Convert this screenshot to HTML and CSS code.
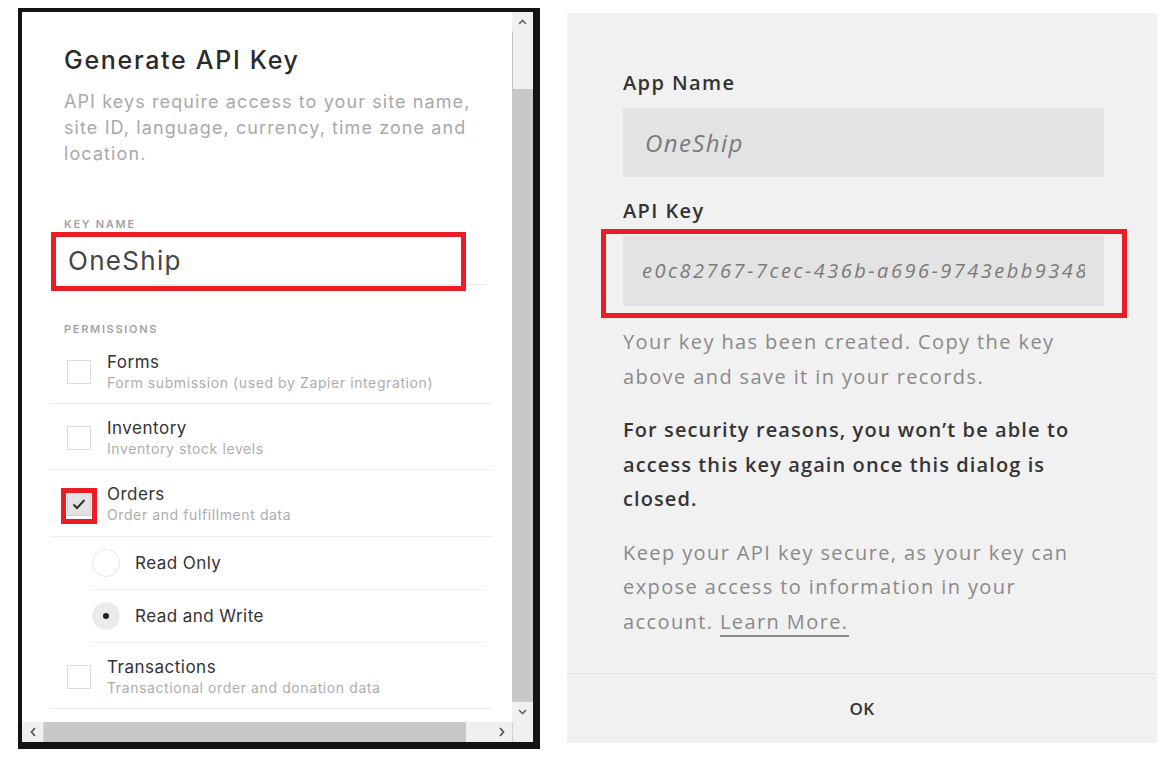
FILE: index.html
```html
<!DOCTYPE html>
<html lang="en">
<head>
    <meta charset="UTF-8">
    <meta name="viewport" content="width=device-width, initial-scale=1.0">
    <title>Generate API Key</title>
    <link rel="stylesheet" href="styles.css">
</head>
<body>
    <div class="frame">
        <div class="viewport">
            <div class="content">
                <h1 class="title">Generate API Key</h1>
                <p class="intro">API keys require access to your site name,<br>site ID, language, currency, time zone and<br>location.</p>

                <div class="label">KEY NAME</div>
                <div class="field">
                    <div class="name-input">OneShip</div>
                    <span class="mark mark-name"></span>
                </div>

                <div class="label perm-label">PERMISSIONS</div>
                <ul class="perms">
                    <li class="perm">
                        <span class="check"></span>
                        <div>
                            <div class="perm-title">Forms</div>
                            <div class="perm-sub">Form submission (used by Zapier integration)</div>
                        </div>
                    </li>
                    <li class="perm">
                        <span class="check"></span>
                        <div>
                            <div class="perm-title">Inventory</div>
                            <div class="perm-sub">Inventory stock levels</div>
                        </div>
                    </li>
                    <li class="perm perm-open">
                        <span class="check checked">
                            <svg width="24" height="24" viewBox="0 0 24 24"><path d="M6.5 12.5l3.5 3.5 7.5-8" fill="none" stroke="#333" stroke-width="2"/></svg>
                            <span class="mark mark-check"></span>
                        </span>
                        <div>
                            <div class="perm-title">Orders</div>
                            <div class="perm-sub">Order and fulfillment data</div>
                        </div>
                    </li>
                    <li class="option">
                        <span class="radio"></span>
                        <span class="option-text">Read Only</span>
                    </li>
                    <li class="option">
                        <span class="radio selected"><span class="dot"></span></span>
                        <span class="option-text">Read and Write</span>
                    </li>
                    <li class="perm">
                        <span class="check"></span>
                        <div>
                            <div class="perm-title">Transactions</div>
                            <div class="perm-sub">Transactional order and donation data</div>
                        </div>
                    </li>
                </ul>
            </div>
        </div>

        <div class="vscroll">
            <div class="sb-btn">
                <svg width="9" height="6" viewBox="0 0 9 6"><path d="M1 5l3.5-3.5L8 5" fill="none" stroke="#666" stroke-width="1.6"/></svg>
            </div>
            <div class="vtrack"></div>
            <div class="vthumb"></div>
            <div class="sb-btn">
                <svg width="9" height="6" viewBox="0 0 9 6"><path d="M1 1l3.5 3.5L8 1" fill="none" stroke="#666" stroke-width="1.6"/></svg>
            </div>
        </div>
        <div class="hscroll">
            <div class="sb-btn">
                <svg width="6" height="10" viewBox="0 0 6 10"><path d="M5 1L1.5 5 5 9" fill="none" stroke="#555" stroke-width="1.8"/></svg>
            </div>
            <div class="hthumb"></div>
            <div class="htrack"></div>
            <div class="sb-btn">
                <svg width="6" height="10" viewBox="0 0 6 10"><path d="M1 1l3.5 4L1 9" fill="none" stroke="#555" stroke-width="1.8"/></svg>
            </div>
        </div>
        <div class="corner"></div>
    </div>

    <div class="dialog">
        <div class="dialog-body">
            <div class="d-label">App Name</div>
            <div class="d-field app-name">OneShip</div>

            <div class="d-label">API Key</div>
            <div class="key-wrap">
                <div class="d-field api-key"><span class="key-text">e0c82767-7cec-436b-a696-9743ebb93482</span></div>
                <span class="mark mark-key"></span>
            </div>

            <p class="d-text">Your key has been created. Copy the key<br>above and save it in your records.</p>
            <p class="d-text strong">For security reasons, you won’t be able to<br>access this key again once this dialog is<br>closed.</p>
            <p class="d-text">Keep your API key secure, as your key can<br>expose access to information in your<br>account. <a href="#" class="learn">Learn More.</a></p>
        </div>
        <div class="dialog-footer">OK</div>
    </div>
</body>
</html>
```

FILE: styles.css
```css
body {
    margin: 0;
    background-color: #fff;
    display: flex;
    align-items: flex-start;
    font-family: 'Inter', 'Liberation Sans', sans-serif;
}

/* left: scrolled settings panel */
.frame {
    margin: 8px 0 0 18px;
    width: 511px;
    height: 730px;
    border-style: solid;
    border-color: #111315;
    border-width: 4px 7px 7px 4px;
    display: grid;
    grid-template-columns: 490px 21px;
    grid-template-rows: 710px 20px;
    background-color: #fff;
}

.viewport {
    overflow: hidden;
}

.content {
    padding: 0 20px 0 28px;
}

.title {
    margin: 33px 0 0 14px;
    font-size: 25px;
    line-height: 30px;
    font-weight: 500;
    color: #2b2b2b;
    letter-spacing: 1.7px;
}

.intro {
    margin: 14px 0 0 14px;
    font-size: 18px;
    line-height: 26px;
    color: #a9a9a9;
    letter-spacing: 1.1px;
}

.label {
    margin: 50px 0 0 14px;
    font-size: 11px;
    line-height: 14px;
    font-weight: 600;
    letter-spacing: 1.7px;
    color: #a3a3a3;
}

.field {
    position: relative;
    margin: 7px 7px 0 14px;
    border-bottom: 1px solid #e8e8e8;
}

.name-input {
    height: 46px;
    line-height: 46px;
    padding-left: 4px;
    font-size: 26px;
    color: #454545;
    letter-spacing: 1.3px;
}

.mark {
    position: absolute;
    box-sizing: border-box;
    border: 5px solid #ec1c24;
}

.mark-name {
    left: -13px;
    top: -6px;
    width: 415px;
    height: 59px;
}

.perm-label {
    margin-top: 37px;
    margin-bottom: 2px;
}

.perms {
    list-style: none;
    margin: 0;
    padding: 0;
}

.perm {
    display: flex;
    align-items: flex-start;
    padding: 13px 0 10px 17px;
    border-bottom: 1px solid #ececec;
}

.perm-open {
    padding-bottom: 11px;
}

.check {
    position: relative;
    width: 24px;
    height: 24px;
    box-sizing: border-box;
    border: 1px solid #dcdcdc;
    margin: 9px 16px 0 0;
    flex-shrink: 0;
}

.check.checked {
    background-color: #e3e3e3;
    border-color: #d0d0d0;
}

.check svg {
    position: absolute;
    left: -1px;
    top: -1px;
}

.mark-check {
    left: -7px;
    top: -5px;
    width: 36px;
    height: 36px;
}

.perm-title {
    font-size: 17px;
    line-height: 22px;
    color: #333;
    letter-spacing: 0.5px;
}

.perm-sub {
    font-size: 14px;
    line-height: 20px;
    color: #adadad;
    letter-spacing: 0.6px;
}

.option {
    display: flex;
    align-items: center;
    padding: 12px 0;
    margin: 0 8px 0 42px;
    border-bottom: 1px solid #ececec;
}

.radio {
    width: 28px;
    height: 28px;
    box-sizing: border-box;
    border: 1px solid #e4e4e4;
    border-radius: 50%;
    margin-right: 15px;
    display: flex;
    justify-content: center;
    align-items: center;
}

.radio.selected {
    background-color: #ebebeb;
    border-color: #ebebeb;
}

.dot {
    width: 6px;
    height: 6px;
    border-radius: 50%;
    background-color: #222;
}

.option-text {
    font-size: 17px;
    color: #333;
    letter-spacing: 0.45px;
}

/* fake browser scrollbars */
.vscroll {
    display: flex;
    flex-direction: column;
    background-color: #f0f0f0;
}

.vtrack {
    height: 57px;
    border-left: 1px solid #c4c4c4;
}

.vthumb {
    height: 613px;
    background-color: #c8c8c8;
}

.hscroll {
    display: flex;
    background-color: #f0f0f0;
}

.sb-btn {
    width: 21px;
    height: 20px;
    display: flex;
    justify-content: center;
    align-items: center;
    flex-shrink: 0;
}

.hscroll .sb-btn:first-child {
    border-right: 1px solid #d8d8d8;
}

.hthumb {
    width: 422px;
    background-color: #c8c8c8;
}

.htrack {
    flex: 1;
}

.corner {
    background-color: #f0f0f0;
    border-left: 1px solid #d0d0d0;
}

/* right: key created dialog */
.dialog {
    margin: 13px 0 0 27px;
    width: 590px;
    height: 730px;
    background-color: #f1f1f1;
    display: flex;
    flex-direction: column;
    font-family: 'Open Sans', 'Liberation Sans', sans-serif;
}

.dialog-body {
    flex: 1;
    padding: 58px 53px 0 56px;
}

.d-label {
    font-size: 20px;
    line-height: 24px;
    font-weight: 600;
    color: #333;
    letter-spacing: 1.4px;
    margin-bottom: 13px;
}

.d-field {
    background-color: #e3e3e3;
    height: 70px;
    line-height: 70px;
    font-style: italic;
    color: #7a7a7a;
    white-space: nowrap;
}

.app-name {
    font-size: 24px;
    padding-left: 22px;
    margin-bottom: 22px;
    height: 69px;
    line-height: 69px;
    letter-spacing: 1.4px;
}

.key-wrap {
    position: relative;
}

.api-key {
    font-size: 20px;
    padding: 0 19px;
}

.key-text {
    display: block;
    overflow: hidden;
    letter-spacing: 2.5px;
}

.mark-key {
    left: -22px;
    top: -7px;
    width: 526px;
    height: 89px;
}

.d-text {
    margin: 19px 0 0;
    font-size: 20px;
    line-height: 34.5px;
    color: #8a8a8a;
    letter-spacing: 1.4px;
}

.d-text.strong {
    font-weight: 600;
    color: #353535;
    letter-spacing: 1.1px;
}

.learn {
    color: #8a8a8a;
    text-decoration: none;
    border-bottom: 2px solid #8a8a8a;
}

.dialog-footer {
    height: 69px;
    border-top: 1px solid #e2e2e2;
    display: flex;
    justify-content: center;
    align-items: center;
    font-size: 17px;
    font-weight: 600;
    color: #333;
    letter-spacing: 0.5px;
}
```
